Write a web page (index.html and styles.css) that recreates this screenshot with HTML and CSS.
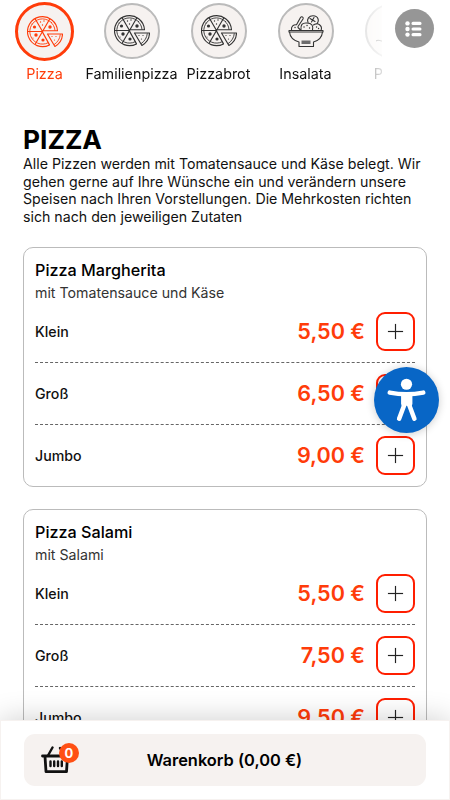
FILE: index.html
```
<!DOCTYPE html>
<html lang="de">
<head>
    <meta charset="UTF-8">
    <meta name="viewport" content="width=device-width, initial-scale=1.0">
    <title>Pizza</title>
    <link rel="stylesheet" href="styles.css">
</head>
<body>
    <svg class="sprite" width="0" height="0">
        <symbol id="pizza" viewBox="0 0 36 32">
            <g fill="none" stroke="currentColor" stroke-width="1.15" stroke-linejoin="round">
                <path d="M30.500 14.700A15 15 0 1 0 22.500 28.900L15.500 16.100V14.700Z"/>
                <path d="M28 14.700A12.600 12.600 0 1 0 21.200 26.700" stroke-width="0.900"/>
                <path d="M.8 15.500H15.500M8 2.500L15.500 15.500L23 2.500M8 28.500L15.500 15.500"/>
                <path d="M20.500 18H35.500C35.400 23 32.500 27.800 27.900 30.500Z"/>
                <path d="M33.300 18.300C33 22.500 30.700 26.200 27 28.700" stroke-width="0.900"/>
            </g>
            <g fill="currentColor">
                <circle cx="7.500" cy="11" r="1.600"/>
                <circle cx="23" cy="11" r="1.700"/>
                <circle cx="9" cy="19" r="1.700"/>
                <circle cx="16" cy="24" r="1.600"/>
                <circle cx="13.500" cy="6" r=".7"/>
                <circle cx="17" cy="5" r=".7"/>
                <circle cx="15.500" cy="9" r=".7"/>
                <circle cx="6" cy="22" r=".6"/>
                <circle cx="24.500" cy="6.500" r=".6"/>
                <circle cx="5" cy="8" r=".6"/>
                <circle cx="25" cy="20.500" r=".6"/>
                <circle cx="29" cy="20.500" r=".6"/>
                <circle cx="27.500" cy="24" r=".6"/>
            </g>
        </symbol>
        <symbol id="salad" viewBox="0 0 36 32">
            <g fill="none" stroke="currentColor" stroke-width="1.100" stroke-linejoin="round" stroke-linecap="round">
                <path d="M1 15.500H35V17H1ZM1.500 17C2 22 5.500 25.500 11 27V31.500H25.500V27C31 25.500 34 22 34.500 17"/>
                <path d="M3.500 15C3 11.500 5.500 9.500 8.500 9.800L12.500 2.500C13.500 1 16 2 15 4L10 11.500M13 15C12.500 10 14 7.500 19 8C24 8 25.500 11 24.500 15"/>
                <path d="M20 7.500C18.500 4 21 .8 25 .8C30.500 .8 32 6.500 28 9.300M25.500 10C30 7 34.500 10.500 33.200 15M10 12.500L12.500 15M22 3.500L27 6.500M26 2.500L23.500 7"/>
                <path d="M16 12h.1M19 10.500h.1M21.500 13h.1M28.500 12h.1M30.500 13.500h.1M7 12.500h.1" stroke-width="1.300"/>
            </g>
            <path d="M13.500 25.500H22.500V29H13.500Z" fill="currentColor" opacity=".7"/>
        </symbol>
    </svg>

    <nav class="categories">
        <div class="category-list">
            <a class="category active">
                <span class="category-icon"><svg width="36" height="32"><use href="#pizza"/></svg></span>
                <span class="category-name">Pizza</span>
            </a>
            <a class="category">
                <span class="category-icon"><svg width="36" height="32"><use href="#pizza"/></svg></span>
                <span class="category-name">Familienpizza</span>
            </a>
            <a class="category">
                <span class="category-icon"><svg width="36" height="32"><use href="#pizza"/></svg></span>
                <span class="category-name">Pizzabrot</span>
            </a>
            <a class="category">
                <span class="category-icon"><svg width="36" height="32"><use href="#salad"/></svg></span>
                <span class="category-name">Insalata</span>
            </a>
            <a class="category">
                <span class="category-icon"><svg width="36" height="32"><path d="M1 26c3-2 5 1 9 0" fill="none" stroke="currentColor"/></svg></span>
                <span class="category-name">Pasta</span>
            </a>
        </div>
        <button class="menu-button">
            <svg width="18" height="16" viewBox="0 0 18 16" fill="#fff">
                <circle cx="2.500" cy="2.400" r="2.200"/><circle cx="2.500" cy="8" r="2.200"/><circle cx="2.500" cy="13.600" r="2.200"/>
                <rect x="6.500" y=".8" width="10" height="3.200" rx="1.500"/><rect x="6.500" y="6.400" width="10" height="3.200" rx="1.500"/><rect x="6.500" y="12" width="10" height="3.200" rx="1.500"/>
            </svg>
        </button>
    </nav>

    <main>
        <h1>PIZZA</h1>
        <p class="intro">Alle Pizzen werden mit Tomatensauce und Käse belegt. Wir gehen gerne auf Ihre Wünsche ein und verändern unsere Speisen nach Ihren Vorstellungen. Die Mehrkosten richten sich nach den jeweiligen Zutaten</p>

        <section class="product">
            <h2>Pizza Margherita</h2>
            <p class="description">mit Tomatensauce und Käse</p>
            <div class="variant"><span class="size">Klein</span><span class="price">5,50 €</span><button class="add"></button></div>
            <div class="variant"><span class="size">Groß</span><span class="price">6,50 €</span><button class="add"></button></div>
            <div class="variant"><span class="size">Jumbo</span><span class="price">9,00 €</span><button class="add"></button></div>
        </section>

        <section class="product">
            <h2>Pizza Salami</h2>
            <p class="description">mit Salami</p>
            <div class="variant"><span class="size">Klein</span><span class="price">5,50 €</span><button class="add"></button></div>
            <div class="variant"><span class="size">Groß</span><span class="price">7,50 €</span><button class="add"></button></div>
            <div class="variant"><span class="size">Jumbo</span><span class="price">9,50 €</span><button class="add"></button></div>
        </section>
    </main>

    <button class="accessibility">
        <svg width="65" height="66" viewBox="0 0 66 66">
            <circle cx="33" cy="17" r="5.700" fill="#fff"/>
            <path d="M16 25.500Q33 29 50 25.500M25.500 52L31.500 36M41 52L35 36" fill="none" stroke="#fff" stroke-width="4.600" stroke-linecap="round"/>
            <path d="M27.500 26H39V37L37.500 41L33.200 38.500L29 41L27.500 37Z" fill="#fff"/>
        </svg>
    </button>

    <footer class="cart-bar">
        <button class="cart">
            <span class="cart-icon">
                <svg width="28" height="28" viewBox="0 0 28 28" fill="none" stroke="#111" stroke-width="2.400" stroke-linecap="round" stroke-linejoin="round">
                    <path d="M1.500 10H27M4 10.500L5 25.700H25.500L26.500 10.500" stroke-width="2.800"/>
                    <path d="M7 9.500L11.500 1.500M23 9.500L19 2M9.500 15.500V20M13.200 15.500V20M17 15.500V20M20.800 15.500V20"/>
                </svg>
                <span class="cart-count">0</span>
            </span>
            <span class="cart-total">Warenkorb (0,00 €)</span>
        </button>
    </footer>
</body>
</html>
```
FILE: styles.css
```
* {
    box-sizing: border-box;
}
body {
    margin: 0;
    height: 800px;
    overflow: hidden;
    background-color: #ffffff;
    color: #111111;
    font-family: Inter, sans-serif;
}
h1, h2, p {
    margin: 0;
}
button {
    padding: 0;
    border: 0;
    font-family: inherit;
    color: inherit;
}
.sprite {
    display: block;
}

/* Categories */
.categories {
    display: flex;
    height: 124px;
    padding-left: 1px;
}
.category-list {
    display: flex;
    width: 381px;
    overflow: hidden;
    -webkit-mask-image: linear-gradient(to right, #000 334px, rgba(0, 0, 0, 0.4) 362px, rgba(0, 0, 0, 0.15) 381px);
    mask-image: linear-gradient(to right, #000 334px, rgba(0, 0, 0, 0.4) 362px, rgba(0, 0, 0, 0.15) 381px);
}
.category {
    flex: 0 0 87px;
    min-width: 0;
    width: 87px;
    display: flex;
    flex-direction: column;
    align-items: center;
    padding-top: 2px;
    white-space: nowrap;
}
.category-icon {
    display: flex;
    align-items: center;
    justify-content: center;
    width: 56px;
    height: 56px;
    margin: 1px 0 2px;
    border: 2px solid #bbbbbb;
    border-radius: 50%;
    background-color: #f6f2f0;
    color: #333333;
}
.category-name {
    margin-top: 4px;
    font-size: 14.35px;
    line-height: 18px;
}
.category.active .category-icon {
    width: 59px;
    height: 59px;
    margin: 0;
    border: 3px solid #ff3c0a;
    color: #ff3c0a;
}
.category.active .category-name {
    color: #ff3c0a;
}
.menu-button {
    display: flex;
    align-items: center;
    justify-content: center;
    width: 39px;
    height: 39px;
    margin: 9px 0 0 12.5px;
    border-radius: 50%;
    background-color: #969696;
}

/* Products */
main {
    padding: 0 23px;
}
h1 {
    font-size: 26.3px;
    line-height: 32px;
    font-weight: 700;
    color: #000000;
}
.intro {
    font-size: 14.18px;
    line-height: 17.5px;
    margin-top: -1px;
    margin-bottom: 22px;
}
.product {
    height: 240px;
    margin-bottom: 22px;
    padding: 11px 11px 0;
    border: 1px solid #bbbbbb;
    border-radius: 10px;
}
.product h2 {
    font-size: 16.2px;
    line-height: 22px;
    font-weight: 500;
    color: #000000;
}
.description {
    font-size: 14.18px;
    line-height: 23px;
    margin-bottom: -3px;
    color: #333333;
}
.variant {
    display: flex;
    align-items: center;
    height: 62px;
    border-bottom: 1px dashed #666666;
}
.variant:last-child {
    height: 61px;
    border-bottom: 0;
}
.size {
    flex: 1;
    font-size: 14.2px;
    font-weight: 500;
}
.price {
    padding-bottom: 2px;
    font-size: 21.6px;
    line-height: 26px;
    font-weight: 600;
    color: #ff3c0a;
}
.add {
    display: grid;
    place-items: center;
    width: 39px;
    height: 39px;
    margin-left: 11px;
    border: 2px solid #ff1e00;
    border-radius: 9px;
    background-color: #ffffff;
}
.add::before,
.add::after {
    content: "";
    grid-area: 1 / 1;
    width: 15px;
    height: 1px;
    background-color: #222222;
    box-shadow: 0 0 1px #333333;
}
.add::after {
    width: 1px;
    height: 15px;
}

/* Floating button */
.accessibility {
    position: fixed;
    top: 367px;
    right: 11px;
    width: 65px;
    height: 66px;
    border-radius: 50%;
    background-color: #0866c6;
    box-shadow: 0 1px 8px rgba(0, 0, 0, 0.2);
}
.accessibility svg {
    display: block;
}

/* Cart */
.cart-bar {
    position: fixed;
    left: 0;
    right: 0;
    bottom: 0;
    height: 80px;
    padding: 13px 23px;
    border: 1px solid #f6f2f0;
    background-color: #ffffff;
    box-shadow: 0 0 30px rgba(0, 0, 0, 0.2);
}
.cart {
    display: flex;
    align-items: center;
    width: 100%;
    height: 52px;
    padding-left: 17px;
    border-radius: 11px;
    background-color: #f6f2f0;
}
.cart-icon {
    position: relative;
    height: 28px;
}
.cart-count {
    position: absolute;
    top: -3px;
    left: 18px;
    width: 20px;
    height: 20px;
    border-radius: 50%;
    background-color: #ff5014;
    color: #ffffff;
    font-size: 13px;
    line-height: 20px;
    font-weight: 700;
}
.cart-total {
    flex: 1;
    padding-right: 46px;
    font-size: 16.4px;
    font-weight: 600;
    color: #000000;
}
```
